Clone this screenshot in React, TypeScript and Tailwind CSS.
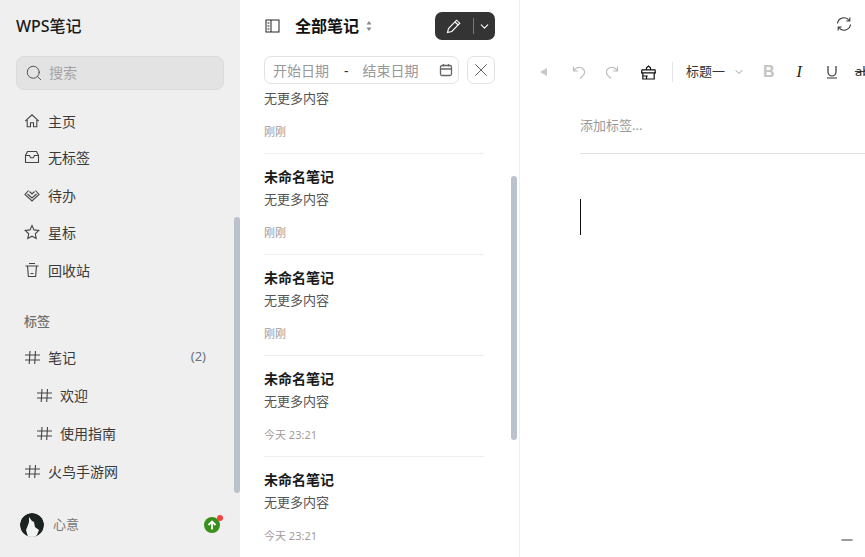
import { ChevronDown, X, Search, Minus } from "lucide-react";

const font = "font-['Noto_Sans','Noto_Sans_CJK_SC',sans-serif]";

function House() {
  return (
    <svg width="16" height="16" viewBox="0 0 16 16" fill="none" stroke="currentColor" strokeWidth="1.1">
      <path d="M1.2 8.2L8 1.8l6.8 6.4M3.2 7v6.8h3.3V9.8h3v4h3.3V7" />
    </svg>
  );
}

function Inbox() {
  return (
    <svg width="16" height="16" viewBox="0 0 16 16" fill="none" stroke="currentColor" strokeWidth="1.1">
      <path d="M3.5 2.5h9l2 4v7h-13v-7z" />
      <path d="M1.5 6.5h4l1.2 2.2h2.6l1.2-2.2h4" />
    </svg>
  );
}

function Todo() {
  return (
    <svg width="16" height="16" viewBox="0 0 16 16" fill="none" stroke="currentColor" strokeWidth="1.1">
      <path d="M4.5 3.5L1 7.5 8 14l7-6.5-3.5-4" />
      <path d="M3.5 7l4.5 4 4.5-4" />
      <path d="M5.5 4.5L8 7l2.5-2.5" />
    </svg>
  );
}

function StarIcon() {
  return (
    <svg width="16" height="16" viewBox="0 0 16 16" fill="none" stroke="currentColor" strokeWidth="1.1">
      <path d="M8 1.5l2 4.4 4.8.6-3.5 3.3.9 4.7L8 12.2l-4.2 2.3.9-4.7L1.2 6.5 6 5.9z" />
    </svg>
  );
}

function Trash() {
  return (
    <svg width="16" height="16" viewBox="0 0 16 16" fill="none" stroke="currentColor" strokeWidth="1.1">
      <path d="M1.5 4h13M5 1.5h6M3.5 4l.9 10.5h7.2l.9-10.5M6.5 11.5h3" />
    </svg>
  );
}

function HashIcon() {
  return (
    <svg width="17" height="17" viewBox="0 0 17 17" fill="none" stroke="#444" strokeWidth="1.1">
      <path d="M1 6h15M1 11h15M6 2l-.8 13M11.5 2l-.8 13" />
    </svg>
  );
}

function SideToggle() {
  return (
    <svg width="15" height="14" viewBox="0 0 15 14" fill="none" stroke="#222" strokeWidth="1">
      <rect x="1" y="1" width="13" height="12" />
      <path d="M6 1v12M2.5 4h2M2.5 7h2M2.5 10h2" />
    </svg>
  );
}

function PencilIcon() {
  return (
    <svg width="16" height="16" viewBox="0 0 16 16" fill="none" stroke="white" strokeWidth="1.1">
      <path d="M1.5 14.5l1-4L10.5 2.2l3.3 3-8 8.3zM9 4l3.2 3" />
    </svg>
  );
}

function CalendarIcon() {
  return (
    <svg width="14" height="14" viewBox="0 0 14 14" fill="none" stroke="#666" strokeWidth="1.3">
      <rect x="1.5" y="2.5" width="11" height="10" rx="1.5" />
      <path d="M1.5 6h11M4.5 1v2.5M9.5 1v2.5" />
    </svg>
  );
}

function SyncIcon() {
  return (
    <svg width="16" height="16" viewBox="0 0 16 16" fill="none" stroke="#333" strokeWidth="1.1">
      <path d="M1.5 7.5A6.5 6.5 0 0 1 13.2 4.5M14.5 8.5A6.5 6.5 0 0 1 2.8 11.5" />
      <path d="M13.8 1.5v3.5h-3.5M2.2 14.5V11h3.5" />
    </svg>
  );
}

function UndoIcon({ flip }: { flip?: boolean }) {
  return (
    <svg width="14" height="15" viewBox="0 0 14 15" fill="none" stroke="#bdbdbd" strokeWidth="1.2" className={flip ? "-scale-x-100" : ""}>
      <path d="M1.5 1.5v4.5H6M1.5 6C3.5 3 6 2 8.5 2.5c3 .6 4.5 3 4 5.5-.4 2-1.8 3.5-4.5 5.5" />
    </svg>
  );
}

function Brush() {
  return (
    <svg width="15" height="15" viewBox="0 0 15 15" fill="none" stroke="#111" strokeWidth="1.2">
      <path d="M5.5 4.5V2.8L7.5 1l2 1.8v1.7M1 4.8h13l.4 3H.6zM1.8 7.8v6.2h11.4V7.8M5.5 14v-3M1.8 11h5" />
    </svg>
  );
}

function UnderlineIcon() {
  return (
    <svg width="12" height="14" viewBox="0 0 12 14" fill="none" stroke="#333" strokeWidth="1.2">
      <path d="M2 1v6a4 4 0 0 0 8 0V1M1 13h10" />
    </svg>
  );
}

function Avatar() {
  return (
    <svg width="24" height="24" viewBox="0 0 24 24" className="rounded-full">
      <circle cx="12" cy="12" r="12" fill="#1d2322" />
      <path d="M9 4l3 4 2 1 1 5 4 3-2 5-2 2H8L6 17l2-5 1-3z" fill="#f1f4f0" />
    </svg>
  );
}

function UploadArrow() {
  return (
    <svg width="10" height="10" viewBox="0 0 10 10" fill="none" stroke="white" strokeWidth="1.8">
      <path d="M5 9.5V1.5M1.5 5L5 1.5 8.5 5" />
    </svg>
  );
}

function NavItem({ icon, label, className = "" }: { icon: React.ReactNode; label: string; className?: string }) {
  return (
    <div className={`h-[38px] flex items-center gap-[8px] pl-[24px] text-[14px] text-[#3a3a3a] ${className}`}>
      <span className="w-4 flex justify-center text-[#444]">{icon}</span>
      <span>{label}</span>
    </div>
  );
}

function TagItem({ label, count, nested }: { label: string; count?: string; nested?: boolean }) {
  return (
    <div className={`h-[38px] flex items-center pr-[34px] text-[14px] text-[#3a3a3a] ${nested ? "pl-[36px]" : "pl-[24px]"}`}>
      <span className="mr-[7px]"><HashIcon /></span>
      <span className="flex-1">{label}</span>
      {count && <span className="text-[#6b7280] text-[13px]">{count}</span>}
    </div>
  );
}

function NoteRow({ time, first }: { time: string; first?: boolean }) {
  return (
    <div className="h-[101px] border-b border-[#eeeeee] flex flex-col">
      <div className={`h-[22px] mt-[12px] text-[14px] leading-[21px] font-bold text-[#1a1a1a] ${first ? "invisible" : ""}`}>未命名笔记</div>
      <div className="h-[23px] text-[13px] leading-[23px] text-[#555]">无更多内容</div>
      <div className="mt-[12px] text-[11px] leading-[20px] text-[#a59a9a]">{time}</div>
    </div>
  );
}

export default function App() {
  return (
    <div className={`h-[557px] w-[865px] flex overflow-hidden bg-white ${font}`}>
      {/* Sidebar */}
      <div className="w-[240px] shrink-0 bg-[#efefef] flex flex-col relative">
        <div className="pl-[16px] pt-[15px] h-[56px] text-[16px] font-medium text-[#1a1a1a] leading-[22px]">WPS笔记</div>
        <div className="mx-[16px] h-[34px] bg-[#e3e3e3] border border-[#dcdcdc] rounded-[8px] flex items-center pl-[8px] gap-[6px] pb-[1px] text-[14px] text-[#a3a3a3]">
          <Search size={18} strokeWidth={1.2} className="text-[#444]" />
          <span>搜索</span>
        </div>
        <div className="mt-[12px]">
          <NavItem icon={<House />} label="主页" />
          <NavItem icon={<Inbox />} label="无标签" className="-mt-[2px]" />
          <NavItem icon={<Todo />} label="待办" />
          <NavItem icon={<StarIcon />} label="星标" className="-mt-[1px]" />
          <NavItem icon={<Trash />} label="回收站" />
        </div>
        <div className="mt-[19px] h-[26px] pl-[24px] text-[13px] font-medium text-[#6f6f6f] leading-[26px]">标签</div>
        <div className="mt-[4px]">
          <TagItem label="笔记" count="(2)" />
          <TagItem label="欢迎" nested />
          <TagItem label="使用指南" nested />
          <TagItem label="火鸟手游网" />
        </div>
        <div className="mt-auto h-[52px] flex items-center pl-[20px] pr-[20px] pb-[13px] relative">
          <Avatar />
          <span className="ml-[9px] text-[13px] text-[#777] flex-1">心意</span>
          <span className="w-4 h-4 rounded-full bg-[#3a8f1c] flex items-center justify-center relative">
            <UploadArrow />
            <span className="absolute -top-[2px] -right-[3px] w-[6px] h-[6px] rounded-full bg-[#f5423a]" />
          </span>
        </div>
        <div className="absolute left-[234px] top-[217px] w-[6px] h-[276px] rounded-[3px] bg-[#bcc2cc]" />
      </div>

      {/* Note list */}
      <div className="w-[280px] shrink-0 border-r border-[#eeeeee] flex flex-col relative overflow-hidden">
        <div className="h-[52px] shrink-0 flex items-center pl-[25px] pr-[24px]">
          <SideToggle />
          <span className="ml-[15px] text-[16px] leading-[22px] pb-[1px] font-bold text-[#111]">全部笔记</span>
          <svg width="6" height="12" viewBox="0 0 6 12" className="ml-[7px]" fill="#888">
            <path d="M3 1l2.5 3.5h-5zM3 11L.5 7.5h5z" />
          </svg>
          <div className="ml-auto h-[28px] w-[60px] rounded-[7px] bg-[#333433] flex items-center text-white">
            <span className="w-[38px] flex justify-center"><PencilIcon /></span>
            <span className="h-[16px] w-px bg-[#777]" />
            <span className="flex-1 flex justify-center"><ChevronDown size={13} strokeWidth={2} /></span>
          </div>
        </div>
        <div className="h-[40px] shrink-0 flex items-center pl-[24px] pr-[24px] gap-[8px] pb-[4px]">
          <div className="w-[195px] h-[28px] border border-[#e2e2e2] rounded-[7px] flex items-center text-[14px] text-[#999] pl-[8px] pr-[5px]">
            <span>开始日期</span>
            <span className="ml-[15px] text-[#333]">-</span>
            <span className="ml-[14px]">结束日期</span>
            <span className="ml-auto"><CalendarIcon /></span>
          </div>
          <div className="w-[28px] h-[28px] border border-[#e2e2e2] rounded-[7px] flex items-center justify-center text-[#555]">
            <X size={22} strokeWidth={1} />
          </div>
        </div>
        <div className="flex-1 min-h-0 overflow-hidden px-[24px] pr-[35px]">
          <div className="-mt-[39px]">
            <NoteRow time="刚刚" first />
            <NoteRow time="刚刚" />
            <NoteRow time="刚刚" />
            <NoteRow time="今天 23:21" />
            <NoteRow time="今天 23:21" />
          </div>
        </div>
        <div className="absolute left-[271px] top-[176px] w-[6px] h-[264px] rounded-[3px] bg-[#bcc2cc]" />
      </div>

      {/* Editor */}
      <div className="flex-1 min-w-0 flex flex-col relative overflow-hidden">
        <div className="h-[48px] shrink-0 flex items-center justify-end pr-[13px]">
          <SyncIcon />
        </div>
        <div className="h-[48px] shrink-0 flex items-center whitespace-nowrap pl-[20px]">
          <svg width="7" height="8" viewBox="0 0 7 8" fill="#c8c8c8" className="shrink-0"><path d="M0 4l7-4v8z" /></svg>
          <span className="ml-[25px] shrink-0"><UndoIcon /></span>
          <span className="ml-[19px] shrink-0"><UndoIcon flip /></span>
          <span className="ml-[22px] shrink-0"><Brush /></span>
          <span className="ml-[16px] h-[20px] w-px bg-[#e5e5e5] shrink-0" />
          <span className="ml-[13px] text-[13px] text-[#333] shrink-0">标题一</span>
          <ChevronDown size={12} strokeWidth={1.3} className="ml-[8px] text-[#666] shrink-0" />
          <span className="ml-[18px] text-[16px] leading-[20px] font-bold text-[#c4c4c4] font-['Liberation_Sans',sans-serif] shrink-0">B</span>
          <span className="ml-[22px] text-[16px] leading-[20px] italic text-[#222] font-['Liberation_Serif',serif] shrink-0">I</span>
          <span className="ml-[24px] shrink-0"><UnderlineIcon /></span>
          <span className="ml-[17px] text-[13px] text-[#333] line-through shrink-0">ab</span>
        </div>
        <div className="ml-[60px] h-[58px] shrink-0 border-b border-[#e3e3e3] text-[13px] text-[#9a9a9a] leading-[58px]">添加标签...</div>
        <div className="ml-[60px] mt-[45px] w-px h-[36px] bg-[#111]" />
        <Minus size={18} strokeWidth={1.3} className="absolute right-[9px] bottom-[8px] text-[#333]" />
      </div>
    </div>
  );
}
